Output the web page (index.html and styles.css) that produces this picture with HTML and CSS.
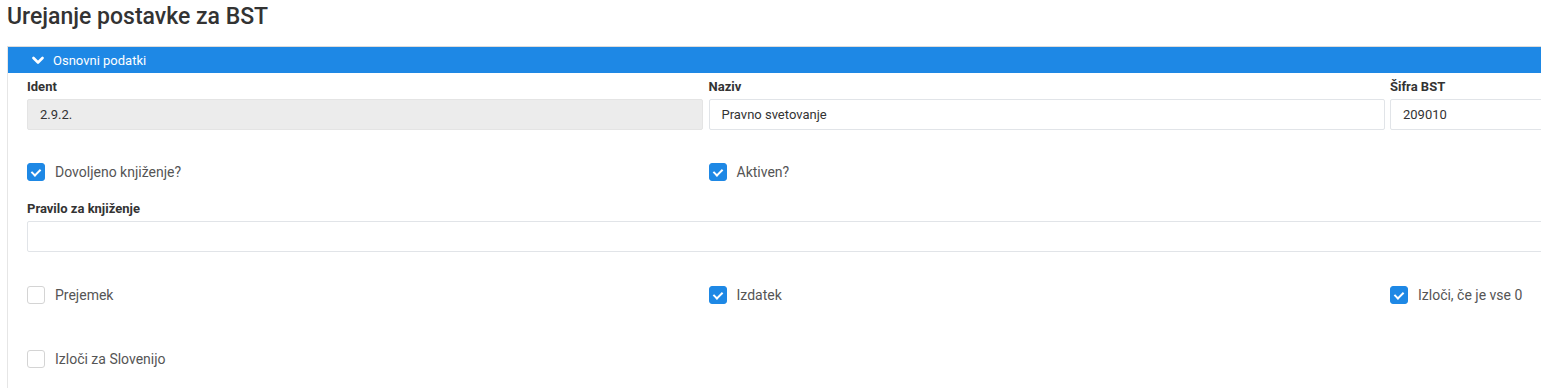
FILE: index.html
```html
<!DOCTYPE html>
<html lang="sl">
<head>
  <meta charset="UTF-8">
  <title>Urejanje postavke za BST</title>
  <link rel="stylesheet" href="styles.css">
</head>
<body>

<div class="page">
  <h1 class="title">Urejanje postavke za BST</h1>

  <div class="panel">
    <div class="panel-head">
      <svg class="chevron" width="12" height="9" viewBox="0 0 12 9">
        <path d="M1.5 2 L6 6.5 L10.5 2" fill="none" stroke="#fff" stroke-width="2.6" stroke-linecap="round" stroke-linejoin="round"/>
      </svg>
      <span>Osnovni podatki</span>
    </div>

    <div class="panel-body">
      <div class="row-3">
        <div class="field">
          <label>Ident</label>
          <div class="input readonly">2.9.2.</div>
        </div>
        <div class="field">
          <label>Naziv</label>
          <div class="input">Pravno svetovanje</div>
        </div>
        <div class="field">
          <label>Šifra BST</label>
          <div class="input">209010</div>
        </div>
      </div>

      <div class="row-3 checks first">
        <div class="check"><span class="box on"></span>Dovoljeno knjiženje?</div>
        <div class="check"><span class="box on"></span>Aktiven?</div>
      </div>

      <div class="field wide">
        <label>Pravilo za knjiženje</label>
        <div class="input"></div>
      </div>

      <div class="row-3 checks">
        <div class="check"><span class="box"></span>Prejemek</div>
        <div class="check"><span class="box on"></span>Izdatek</div>
        <div class="check"><span class="box on"></span>Izloči, če je vse 0</div>
      </div>

      <div class="row-3 checks last">
        <div class="check"><span class="box"></span>Izloči za Slovenijo</div>
      </div>
    </div>
  </div>
</div>

</body>
</html>
```

FILE: styles.css
```css
body {
  margin: 0;
  font-family: Roboto, "Liberation Sans", sans-serif;
  background: #fff;
  color: #333;
  overflow: hidden;
}
.page {
  padding: 0 0 0 7px;
  width: 2100px;
}
.title {
  margin: 0;
  padding-top: 3px;
  height: 43px;
  font-size: 23px;
  font-weight: 500;
  line-height: 28px;
  color: #333;
}
.panel {
  border-left: 1px solid #e6e6e6;
  border-top: 1px solid #dcdcdc;
}
.panel-head {
  display: flex;
  align-items: center;
  height: 26px;
  padding-left: 24px;
  background: #1e88e5;
  color: #fff;
  font-size: 13px;
}
.chevron {
  margin-right: 9px;
}
.panel-body {
  padding: 6px 0 12px 19px;
}
.row-3 {
  display: grid;
  grid-template-columns: repeat(3, 676px);
  column-gap: 5.5px;
}
.field label {
  display: block;
  height: 16px;
  line-height: 16px;
  font-size: 13px;
  font-weight: 700;
  color: #333;
  margin-bottom: 4px;
}
.input {
  box-sizing: border-box;
  height: 31px;
  line-height: 29px;
  padding: 0 12px;
  border: 1px solid #e1e4e8;
  border-radius: 2px;
  font-size: 13px;
  color: #333;
  background: #fff;
}
.input.readonly {
  background: #ececec;
  border-color: #e4e4e4;
}
.field.wide .input {
  width: 2028px;
}
.checks {
  margin-top: 26px;
}
.checks.first {
  margin-top: 25px;
  margin-bottom: 12px;
}
.checks.last {
  margin-top: 30px;
}
.check {
  display: flex;
  align-items: center;
  height: 34px;
  font-size: 14px;
  color: #555;
}
.box {
  box-sizing: border-box;
  width: 18px;
  height: 18px;
  margin-right: 10px;
  border: 1px solid #d4d4d4;
  border-radius: 3px;
  background: #fff;
  position: relative;
}
.box.on {
  border-color: #1e88e5;
  background: #1e88e5;
}
.box.on::after {
  content: '';
  position: absolute;
  left: 5px;
  top: 3px;
  width: 4px;
  height: 7px;
  border: solid #fff;
  border-width: 0 2.5px 2.5px 0;
  transform: rotate(45deg);
}
```
